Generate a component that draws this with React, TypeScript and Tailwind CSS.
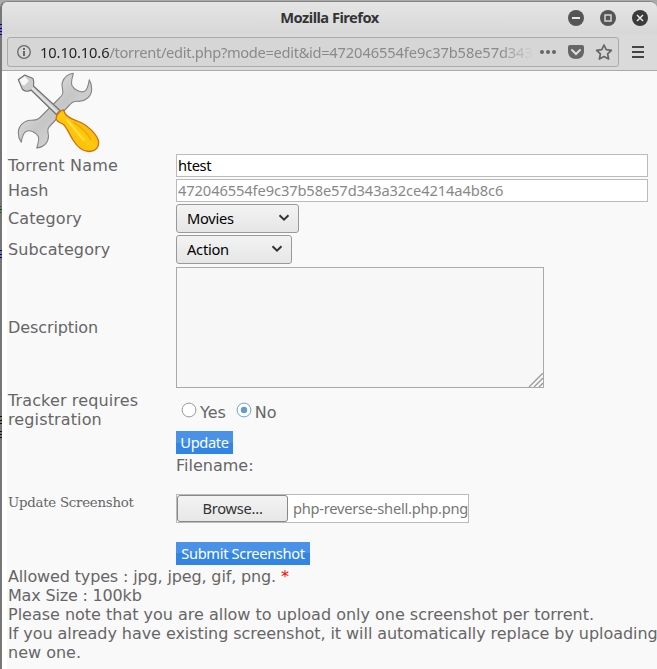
import type { ReactNode } from "react";

const ui = "font-['Noto_Sans','Open_Sans',sans-serif]";

function Row({ label, className, children }: { label: ReactNode; className: string; children: ReactNode }) {
  return (
    <div className={`flex shrink-0 items-center ${className}`}>
      <div className="w-[168px] shrink-0 pr-4">{label}</div>
      {children}
    </div>
  );
}

function Select({ value, className }: { value: string; className: string }) {
  return (
    <div className={`flex h-[29px] items-center justify-between rounded-[3px] border border-[#999] bg-linear-to-b from-[#f3f3f3] to-[#e6e6e6] pl-2.5 pr-2 text-[14.67px] text-black ${ui} ${className}`}>
      <span className="tracking-[-0.25px]">{value}</span>
      <svg width="12" height="8" viewBox="0 0 12 8" fill="none" stroke="#303436" strokeWidth="2" className="mb-px">
        <path d="M1.5 1.2 6 5.7l4.5-4.5" />
      </svg>
    </div>
  );
}

function Radio({ checked }: { checked?: boolean }) {
  return (
    <svg width="16" height="16" viewBox="0 0 16 16" className="mb-[5px]">
      <circle cx="8" cy="8" r="6.9" fill="white" stroke={checked ? "#6fa3cf" : "#999"} />
      {checked && <circle cx="8" cy="8" r="3.2" fill="#639bcd" />}
    </svg>
  );
}

function Tools() {
  return (
    <svg width="84" height="82" viewBox="16 71 84 82" className="ml-2 block shrink-0">
      <defs>
        <linearGradient id="steel" x1="0" y1="0" x2="1" y2="1">
          <stop offset="0" stopColor="#eeeeee" />
          <stop offset=".5" stopColor="#c6c6c6" />
          <stop offset="1" stopColor="#e6e6e6" />
        </linearGradient>
        <linearGradient id="handle" x1="0" y1="1" x2="1" y2="0">
          <stop offset="0" stopColor="#f8b400" />
          <stop offset=".5" stopColor="#ffc90c" />
          <stop offset="1" stopColor="#eea500" />
        </linearGradient>
      </defs>
      <path
        d="M73.300 73.300C68 74 64 77.500 62.300 82.500C61 87 63.500 90 62.700 93.500C62.300 95.500 60.500 97 58.500 99L40 117.500C37.500 120 34.500 120.300 31 120.300C24 120.500 18.500 125.500 18.300 132.500C18.200 136.500 19.300 139.500 21.200 142.300C22.200 138.500 22.300 133.500 26 131.500C30 129.500 36.500 132.500 38.300 136.500C39.500 140 37.800 144 36.700 148C43.500 147.500 48.300 142.500 48.500 136.500C48.500 133 46.500 130 49 127L70 104.500C72 102 74 101 77.500 101.300C85 102 91.500 96.500 91.700 89.500C91.800 85.500 91 82.500 89.300 79.800C88.300 84.500 88 89.500 84.500 91.300C80.500 93 74 89.500 72 85.500C70.500 81.500 72.500 77.500 73.300 73.300Z"
        fill="url(#steel)" stroke="#858585" strokeWidth="1.1" strokeLinejoin="round"
      />
      <path d="M18.300 79.800 24.700 75 33 78.500C34 81 34 83.500 33.500 86L60 110.500 56.300 114.500 31 90C28.500 92 24.500 91.500 22.500 89.500Z" fill="#cbcbcb" stroke="#707070" strokeWidth="1.100" strokeLinejoin="round" />
      <path d="m19.500 80 5.300-3.800 4 4.700-4.500 4.500-2.500-.700Z" fill="#f7f7f7" />
      <path d="m32 88 25 24" stroke="#e9e9e9" strokeWidth="1.300" />
      <path d="M63.300 109.800C64.500 111.800 64.500 113 66.300 115C69 118.500 75.500 120 81 122.500C88 126 96 133.500 98.200 140C100 146.500 96 151.500 89 151.500C82 151.500 77 146.500 73 140C69.500 134.500 67 128 63.500 124.500C60.500 122.500 57.500 122.500 56 119C56.500 114.500 59.500 111 63.300 109.800Z" fill="url(#handle)" stroke="#ca6e17" strokeWidth="1.300" />
      <path d="M67 120c5 5 10 13 17 20" stroke="#ffe45c" strokeWidth="2" fill="none" strokeLinecap="round" opacity=".75" />
      <path d="M73 122c8 5 14 10 18 18" stroke="#d99100" strokeWidth="1.200" fill="none" opacity=".6" />
    </svg>
  );
}

function WindowButtons() {
  return (
    <svg width="82" height="18" viewBox="567 9 82 18" fill="none" className="ml-auto mr-2">
      <g fill="#555"><circle cx="576" cy="18" r="8" /><circle cx="608" cy="18" r="8" /></g>
      <circle cx="640" cy="18" r="8" fill="#3b3b3b" />
      <path d="M572 18h8" stroke="#e8e8e8" strokeWidth="2" />
      <path d="M605 15h6v6h-6z" stroke="#d5d5d5" strokeWidth="1.500" />
      <path d="m637 15 6 6m0-6-6 6" stroke="#e8e8e8" strokeWidth="1.500" />
    </svg>
  );
}

function BackgroundWindowEdge() {
  return (
    <svg width="2" height="669" viewBox="0 0 2 669" className="absolute left-0 top-0" strokeWidth="1">
      <path d="M0 24.500h2M0 28.500h2M0 31.500h2M0 34.500h2M0 250.500h2M0 254.500h2M0 257.500h2" stroke="#0000b0" />
      <path d="M0 206.500h1M0 209.500h2M0 212.500h1" stroke="#075607" />
      <path d="M0 416.500h2M0 420.500h2M0 423.500h2M0 431.500h2M0 434.500h2M0 437.500h2" stroke="#111" />
    </svg>
  );
}

export default function App() {
  return (
    <div className="relative h-[669px] w-[657px] overflow-hidden bg-[#aaa] pt-px">
      <div className="flex h-[668px] flex-col overflow-hidden rounded-t-[7px] border-l-2 border-t border-l-[#777] border-t-[#858585] bg-[#dadada]">
        <header className={`relative flex h-8 shrink-0 items-center bg-linear-to-b from-[#e5e5e5] to-[#d7d7d7] ${ui}`}>
          <div className="absolute inset-x-0 pb-0.5 text-center text-[14.67px] font-bold tracking-[-0.52px] text-[#343434]">Mozilla Firefox</div>
          <WindowButtons />
        </header>
        <nav className={`flex h-[37px] shrink-0 items-center border-b border-[#aaa] bg-[#dadada] pl-[5px] ${ui}`}>
          <div className="flex h-[30px] w-[612px] items-center rounded-[3px] border border-[#aaa] bg-[#d6d6d6] pl-2">
            <svg width="16" height="16" viewBox="0 0 16 16" className="shrink-0">
              <circle cx="8" cy="8" r="6.300" fill="none" stroke="#686868" strokeWidth="1.300" />
              <path d="M7 4h2v2H7zm0 3h2v5H7z" fill="#686868" />
            </svg>
            <div className="ml-2 w-[492px] overflow-hidden whitespace-nowrap text-[14.67px] tracking-[-0.1px] text-[#8a8a8a] [mask-image:linear-gradient(to_right,black_460px,transparent_494px)]">
              <span className="text-[#252525]">10.10.10.6</span><span className="tracking-[-0.32px]">/torrent/edit.php?mode=edit&amp;id=</span>472046554fe9c37b58e57d343
            </div>
            <svg width="76" height="18" viewBox="538 43 76 18" className="ml-[6px] shrink-0" fill="none">
              <g fill="#666"><circle cx="542" cy="52" r="2" /><circle cx="548" cy="52" r="2" /><circle cx="554" cy="52" r="2" /></g>
              <path d="M570 45h12q2 0 2 2v4c0 5-3 8-8 8s-8-3-8-8v-4q0-2 2-2Z" fill="#666" />
              <path d="m572 50 4 4 4-4" stroke="#ddd" strokeWidth="2" strokeLinecap="round" />
              <path d="m604 45 2.200 4.700 5.200.6-3.800 3.600 1 5.100-4.600-2.500-4.600 2.500 1-5.100-3.800-3.600 5.200-.6Z" stroke="#666" strokeWidth="1.700" strokeLinejoin="round" />
            </svg>
          </div>
          <svg width="12" height="12" viewBox="0 0 12 12" className="ml-[13px]" stroke="#454545" strokeWidth="2"><path d="M0 1h12M0 6h12M0 11h12" /></svg>
        </nav>
        <main className="flex min-h-0 flex-1 flex-col border-l-[5px] border-white bg-[#f9f9f9] pl-px font-['DejaVu_Sans',sans-serif] text-[16px] leading-[19px] text-[#666]">
          <Tools />
          <Row label={<span className="tracking-[0.17px]">Torrent Name</span>} className="h-[25px]">
            <div className={`h-[23px] w-[472px] border border-[#bbb] bg-white pl-px text-[14.67px] leading-[21px] tracking-[-0.35px] text-black ${ui}`}>htest</div>
          </Row>
          <Row label="Hash" className="h-[25px]">
            <div className={`h-[23px] w-[472px] border border-[#bbb] bg-white pl-px text-[14.67px] leading-[20px] tracking-[-0.1px] text-[#888] ${ui}`}>472046554fe9c37b58e57d343a32ce4214a4b8c6</div>
          </Row>
          <Row label={<span className="tracking-[0.1px]">Category</span>} className="h-[31px]"><Select value="Movies" className="w-[123px]" /></Row>
          <Row label={<span className="tracking-[0.1px]">Subcategory</span>} className="h-[31px]"><Select value="Action" className="w-[116px]" /></Row>
          <Row label={<span className="tracking-[-0.1px]">Description</span>} className="h-[125px]">
            <div className="flex h-[121px] w-[368px] items-end justify-end border border-[#aaa] bg-[#f7f7f7]">
              <svg width="15" height="14" viewBox="0 0 15 14" stroke="#999" fill="none"><path d="M1 14 15 0M6 14 15 5M11 14 15 10" strokeWidth="1.300" /></svg>
            </div>
          </Row>
          <Row label={<span className="tracking-[0.13px]">Tracker requires registration</span>} className="h-10">
            <div className="flex h-5 items-center pl-[5px] pt-1"><Radio checked={false} /><span className="ml-[3px]">Yes</span><span className="w-[10px]" /><Radio checked /><span className="ml-[3px]">No</span></div>
          </Row>
          <Row label="" className="h-[25px]">
            <button className={`h-[23px] w-[57px] bg-linear-to-b from-[#4992e7] from-50% to-[#3385e3] to-50% text-[14.67px] leading-[23px] tracking-[-0.35px] text-white ${ui}`}>Update</button>
          </Row>
          <section className="flex h-[112px] shrink-0">
            <div className="w-[168px] pt-[38px] font-['DejaVu_Serif',serif] text-[13.33px] tracking-[-0.25px]">Update Screenshot</div>
            <div className="flex flex-col items-start pt-px">
              <div>Filename:</div>
              <div className={`mt-[19px] flex h-[29px] w-[293px] items-center border border-[#bbb] bg-white text-[14.67px] ${ui}`}>
                <button className="h-[27px] w-[111px] shrink-0 rounded-[3px] border border-[#888] bg-linear-to-b from-[#f3f3f3] to-[#e7e7e7] tracking-[-0.25px] text-[#333]">Browse...</button>
                <span className="ml-[5px] whitespace-nowrap tracking-[-0.25px] text-[#777]">php-reverse-shell.php.png</span>
              </div>
              <button className={`mt-[19px] h-[23px] w-[134px] bg-linear-to-b from-[#4992e7] from-50% to-[#3385e3] to-50% text-[14.67px] leading-[23px] tracking-[-0.35px] text-white ${ui}`}>Submit Screenshot</button>
            </div>
          </section>
          <footer className="whitespace-nowrap">
            <p className="tracking-[-0.14px]">Allowed types : jpg, jpeg, gif, png. <span className="text-[#ff0000]">*</span></p>
            <p className="tracking-[-0.18px]">Max Size : 100kb</p>
            <p className="tracking-[-0.01px]">Please note that you are allow to upload only one screenshot per torrent.</p>
            <p className="tracking-[-0.06px]">If you already have existing screenshot, it will automatically replace by uploading</p>
            <p>new one.</p>
          </footer>
        </main>
      </div>
      <BackgroundWindowEdge />
    </div>
  );
}
